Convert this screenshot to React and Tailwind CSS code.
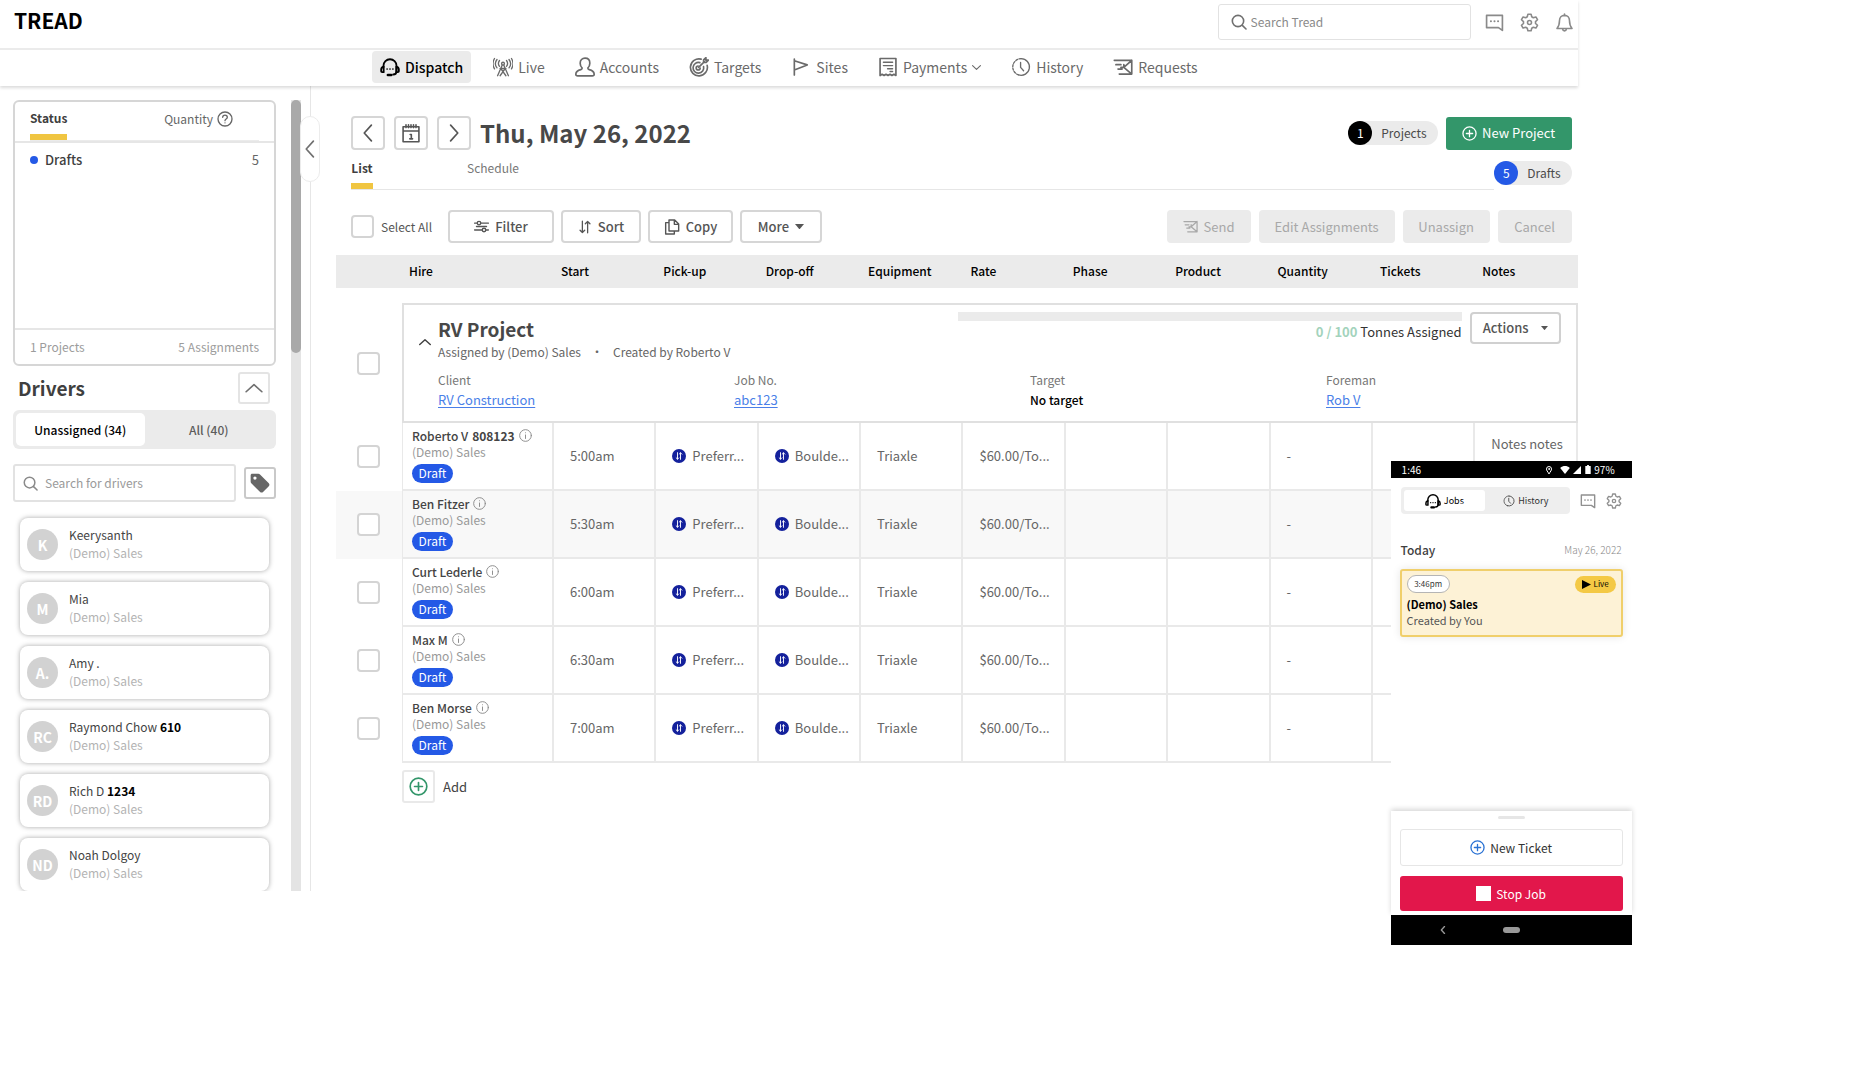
import React from 'react';

function Svg({ className = 'size-5', box = '0 0 24 24', width = 1.8, children }) {
  return (
    <svg viewBox={box} className={`shrink-0 ${className}`} fill="none" stroke="currentColor" strokeWidth={width} strokeLinecap="round" strokeLinejoin="round" aria-hidden="true">
      {children}
    </svg>
  );
}

const HeadsetIcon = ({ className }) => (
  <Svg className={className} width={2.2}>
    <path d="M4.2 12V10.5a7.8 7.8 0 0 1 15.6 0V17c0 2.4-1.6 4-4 4" />
    <path d="M4.4 11.5C2.4 12 1.4 13 1.4 15v2.2c0 .8.5 1 1.2 1h1.8zM19.6 11.5c2 .5 3 1.5 3 3.5v2.2c0 .8-.5 1-1.2 1h-1.8z" />
    <path d="M9.5 21.6h4" strokeWidth="3.2" />
    <path d="M8.5 14.5h.01M12 14.5h.01M15.5 14.5h.01" strokeWidth="2" />
  </Svg>
);

const TowerIcon = () => (
  <Svg width={1.6}>
    <circle cx="12" cy="8" r="1.7" />
    <path d="M11 9.8 5.5 22.500M13 9.8l5.500 12.700M8.500 22.500l6.100-8.600M15.500 22.500l-6.100-8.600M8.500 13.800h7" />
    <path d="M7.800 4.200c-1.500 2-1.500 5 0 7M4.800 3c-2.400 3-2.400 7 0 10M1.800 1.800c-2.400 4-2.400 8.400 0 12.400" />
    <path d="M16.200 4.200c1.500 2 1.500 5 0 7M19.200 3c2.400 3 2.400 7 0 10M22.200 1.800c2.400 4 2.400 8.400 0 12.400" />
  </Svg>
);

const UserIcon = () => (
  <Svg width={2}>
    <path d="M8.6 13.2C7 11.6 6.2 9.7 6.2 7.4 6.2 3.8 8.600 1.400 12 1.400s5.800 2.400 5.800 6c0 2.300-.8 4.200-2.400 5.800 0 1.300.4 1.700 1.600 2 3.600.9 5.800 2.200 6 5.200.1 1.500-.8 2.200-2.200 2.200H3.200c-1.400 0-2.300-.7-2.200-2.200.2-3 2.400-4.300 6-5.200 1.200-.3 1.600-.7 1.600-2z" />
  </Svg>
);

const TargetIcon = () => (
  <Svg width={2}>
    <path d="M14.500 2.600A10.200 10.200 0 1 0 21.800 10" />
    <path d="M13 6.800A6.400 6.400 0 1 0 17.500 11.500" />
    <path d="M11 10.800a2.400 2.400 0 1 0 2.400 2.400" />
    <path d="M11.500 12.500 18.500 5.500M17.500 6.500V3.500L20.300.8v3h3l-2.700 2.700z" />
  </Svg>
);

const FlagIcon = () => (
  <Svg width={2}>
    <path d="M4 2.500v19M4 4.500l15.500 5L4 15.500" />
  </Svg>
);

const ReceiptIcon = () => (
  <Svg width={2}>
    <path d="M2.500 1.800h19v20.400l-2.400-1.500-2.400 1.500-2.300-1.500-2.400 1.500-2.400-1.500-2.300 1.500-2.400-1.500-2.400 1.500z" />
    <path d="M6.500 6.300h11M6.500 10.300h11M11.500 14h6M14.500 17.300h3" strokeWidth="1.700" />
  </Svg>
);

const ClockIcon = ({ className }) => (
  <Svg className={className} width={1.6}>
    <path d="M12 2a10 10 0 1 1-3 19.500" />
    <path d="M12 2A10 10 0 0 0 9 21.500" strokeDasharray="2.400 1.800" />
    <path d="M11.500 6.500v6l3.600 4" />
  </Svg>
);

const SendIcon = ({ className }) => (
  <Svg className={className} width={2}>
    <path d="M1.500 4h21v16.500h-15M22.500 4l-9.500 8.500M22.500 20.500 13 12.500M3.500 9.200h6M6 14.500h5M13 9v3.500h-3.500" />
  </Svg>
);

const ChatIcon = ({ className }) => (
  <Svg className={className} width={2.1}>
    <path d="M2 3h20v19l-5-3.500H2z" />
    <path d="M7.500 10.500h.01M12 10.500h.01M16.500 10.500h.01" strokeWidth="2.600" />
  </Svg>
);

const GearIcon = ({ className }) => (
  <Svg className={className} width={2}>
    <path d="M10 1.500h4l.8 3.300 2 1.200 3.300-1 2 3.500-2.500 2.300v2.400l2.500 2.300-2 3.500-3.300-1-2 1.200-.8 3.300h-4l-.8-3.300-2-1.200-3.300 1-2-3.500 2.500-2.300v-2.400L1.900 8.500l2-3.500 3.300 1 2-1.200z" />
    <circle cx="12" cy="12" r="2.500" />
  </Svg>
);

const BellIcon = ({ className }) => (
  <Svg className={className} width={2}>
    <path d="M12 1.200V3M12 3c-3.800 0-6.300 2.800-6.300 6.500 0 5-1 7.500-3.200 10h19c-2.200-2.500-3.200-5-3.200-10C18.300 5.800 15.800 3 12 3zM9.500 20c.3 1.800 1.200 2.600 2.500 2.600s2.200-.8 2.500-2.600" />
  </Svg>
);

const SearchIcon = ({ className }) => (
  <Svg className={className} width={2.4}>
    <circle cx="10.500" cy="10.500" r="8.500" />
    <path d="m17 17 5.500 5.500" />
  </Svg>
);

const PlusCircleIcon = ({ className }) => (
  <Svg className={className} width={2.1}>
    <circle cx="12" cy="12" r="10.500" />
    <path d="M12 7v10M7 12h10" />
  </Svg>
);

const Chevron = ({ dir, className, width = 2.2 }) => (
  <Svg className={className} width={width}>
    {dir === 'left' && <path d="M16.500 1.500 7 12l9.500 10.500" />}
    {dir === 'right' && <path d="M7.500 1.500 17 12 7.500 22.500" />}
    {dir === 'up' && <path d="M1.500 17 12 7.500 22.500 17" />}
    {dir === 'down' && <path d="M1.500 7 12 17 22.500 7" />}
  </Svg>
);

const CalendarIcon = () => (
  <Svg className="size-5" width={1.9}>
    <path d="M2.500 4.500h19v18h-19zM2.500 9.500h19M6 2v3.500M9 2v3.500M12 2v3.500M15 2v3.500M18 2v3.500" />
    <path d="M11 13.800h1.400v5M10.500 19h3.400" />
  </Svg>
);

const HelpIcon = () => (
  <Svg className="size-4" width={2}>
    <circle cx="12" cy="12" r="10.500" />
    <path d="M8.500 9.500c0-4.500 7-4.500 7 0 0 2.500-3.500 2.500-3.500 5M12 17.800v.01" />
  </Svg>
);

const InfoIcon = () => (
  <Svg className="size-[13px] text-[#8d8d8d]" width={1.8}>
    <circle cx="12" cy="12" r="10.800" />
    <path d="M12 11v6.500M12 7v.01" />
  </Svg>
);

const SlidersIcon = () => (
  <Svg className="size-[15px]" width={2.2}>
    <circle cx="8" cy="6.500" r="2.800" />
    <circle cx="16" cy="17.500" r="2.800" />
    <path d="M1 6.500h4.200M10.800 6.500H23M1 17.500h12.200M18.800 17.500H23M4 12h16" />
  </Svg>
);

const SortIcon = ({ className, width = 2.2 }) => (
  <Svg className={className} width={width}>
    <path d="M7.500 2v19.500M3.500 17.500l4 4 4-4M16.500 22V2.500M12.500 6.500l4-4 4 4" />
  </Svg>
);

const CopyIcon = () => (
  <Svg className="size-4" width={2.1}>
    <path d="M7.500 1.500h8.500l6 6V18h-14.500zM15.500 2v6h6M7.500 5.500H2.500v17h13V18.500" />
  </Svg>
);

const TagIcon = () => (
  <svg viewBox="0 0 24 24" className="size-[22px] shrink-0" fill="#666" aria-hidden="true">
    <path fillRule="evenodd" d="M3.500 2h6.700c.8 0 1.300.2 1.800.7l9.600 9.600c.9.900.9 2.300 0 3.200l-6.300 6.300c-.9.900-2.300.9-3.200 0l-9.600-9.600c-.5-.5-.7-1-.7-1.800V3.700C1.800 2.700 2.500 2 3.500 2zM6.500 4.800a1.800 1.800 0 1 0 0 3.600 1.800 1.800 0 0 0 0-3.600z" />
  </svg>
);

const CaretDown = ({ className = 'w-[9px]' }) => (
  <svg viewBox="0 0 10 6" className={`shrink-0 ${className}`} fill="currentColor" aria-hidden="true">
    <path d="M0 0h10L5 6z" />
  </svg>
);

const NAV = [
  { label: 'Dispatch', icon: <HeadsetIcon />, active: true },
  { label: 'Live', icon: <TowerIcon /> },
  { label: 'Accounts', icon: <UserIcon /> },
  { label: 'Targets', icon: <TargetIcon /> },
  { label: 'Sites', icon: <FlagIcon /> },
  { label: 'Payments', icon: <ReceiptIcon />, menu: true },
  { label: 'History', icon: <ClockIcon /> },
  { label: 'Requests', icon: <SendIcon /> },
];

const DRIVERS = [
  { initials: 'K', name: 'Keerysanth' },
  { initials: 'M', name: 'Mia' },
  { initials: 'A.', name: 'Amy .' },
  { initials: 'RC', name: 'Raymond Chow', unit: '610' },
  { initials: 'RD', name: 'Rich D', unit: '1234' },
  { initials: 'ND', name: 'Noah Dolgoy' },
];

const COLUMNS = ['Start', 'Pick-up', 'Drop-off', 'Equipment', 'Rate', 'Phase', 'Product', 'Quantity', 'Tickets', 'Notes'];

const ROWS = [
  { name: 'Roberto V', unit: '808123', start: '5:00am', notes: 'Notes notes' },
  { name: 'Ben Fitzer', start: '5:30am', shaded: true },
  { name: 'Curt Lederle', start: '6:00am' },
  { name: 'Max M', start: '6:30am' },
  { name: 'Ben Morse', start: '7:00am' },
];

const PROJECT = [
  { label: 'Client', value: 'RV Construction', link: true },
  { label: 'Job No.', value: 'abc123', link: true },
  { label: 'Target', value: 'No target' },
  { label: 'Foreman', value: 'Rob V', link: true },
];

function Checkbox({ label }) {
  return <input type="checkbox" aria-label={label} className="block size-[23px] shrink-0 appearance-none rounded-[4px] border-2 border-[#d4d4d4] bg-white" />;
}

function Header() {
  return (
    <header className="relative z-10 bg-white shadow-[0_2px_3px_rgba(0,0,0,0.14)]">
      <div className="flex h-[50px] items-center border-b-2 border-[#ebebeb] pb-1 pl-[14px] pr-1">
        <a href="#home" className="pb-1 text-[21px] font-bold leading-[24px] text-black">TREAD</a>
        <label className="ml-auto flex h-9 w-[253px] items-center gap-1 rounded-[3px] border border-[#e2e2e2] pl-3">
          <SearchIcon className="size-4 text-[#707070]" />
          <input type="text" aria-label="Search Tread" placeholder="Search Tread" className="w-full bg-transparent outline-none placeholder:text-[#8a8a8a]" />
        </label>
        <div className="ml-[14px] flex gap-4 text-[#8a8a8a]">
          <button aria-label="Messages"><ChatIcon className="size-[19px]" /></button>
          <button aria-label="Settings"><GearIcon className="size-[19px]" /></button>
          <button aria-label="Notifications"><BellIcon className="size-[19px]" /></button>
        </div>
      </div>
      <nav className="flex h-9 items-center justify-center gap-[14px] pb-[2px]">
        {NAV.map((n) => (
          <a key={n.label} href={`#${n.label.toLowerCase()}`} className={`flex h-8 items-center gap-[5px] rounded-[4px] px-2 text-[14px] leading-5 ${n.active ? 'bg-[#ebebeb] font-medium text-black' : 'text-[#6a6a6a]'}`}>
            {n.icon}
            {n.label}
            {n.menu && <Chevron dir="down" width={3} className="size-[9px]" />}
          </a>
        ))}
      </nav>
    </header>
  );
}

function StatusCard() {
  return (
    <section className="flex h-[266px] flex-col rounded-[6px] border-2 border-[#d6d6d6] text-[#666]">
      <div className="border-b-2 border-[#e6e6e6] px-[15px]">
        <div className="flex h-[39px] justify-between border-b border-[#ebebeb]">
          <button className="flex flex-col justify-between pt-[7px] font-bold text-[#3f3f3f]">
            Status
            <span className="h-[6px] w-full bg-[#f0c541]" />
          </button>
          <button className="flex items-center gap-1 pb-1 pr-[26px]">Quantity <HelpIcon /></button>
        </div>
      </div>
      <div className="flex items-center px-[15px] pt-2">
        <span className="mr-[7px] size-2 rounded-full bg-[#2459e6]" />
        <span className="text-[13px] font-medium text-[#3f3f3f]">Drafts</span>
        <span className="ml-auto text-[13px]">5</span>
      </div>
      <div className="mt-auto flex h-9 items-center justify-between border-t-2 border-[#e6e6e6] px-[15px] text-[12px] text-[#9c9c9c]">
        <span>1 Projects</span>
        <span>5 Assignments</span>
      </div>
    </section>
  );
}

function Sidebar() {
  return (
    <aside className="flex w-[311px] shrink-0 overflow-hidden border-r border-[#e6e6e6] pl-[13px]">
      <div className="w-[263px] pt-[14px]">
        <StatusCard />
        <div className="mt-[6px] flex items-center justify-between pl-[5px] pr-[6px]">
          <h2 className="text-[19px] font-bold leading-6 text-[#3f3f3f]">Drivers</h2>
          <button aria-label="Collapse drivers" className="grid size-8 place-items-center rounded-[3px] border-2 border-[#e4e4e4] text-[#707070]"><Chevron dir="up" className="size-[18px]" /></button>
        </div>
        <div className="mt-[6px] grid h-[39px] grid-cols-2 rounded-[6px] bg-[#ebebeb] p-[3px] font-medium">
          <button className="rounded-[5px] bg-white text-black">Unassigned (34)</button>
          <button className="text-[#5c5c5c]">All (40)</button>
        </div>
        <div className="mt-[15px] flex items-center gap-2">
          <label className="flex h-[38px] flex-1 items-center gap-[7px] rounded-[3px] border-2 border-[#e2e2e2] pl-2">
            <SearchIcon className="size-[15px] text-[#8a8a8a]" />
            <input type="text" aria-label="Search for drivers" placeholder="Search for drivers" className="w-full bg-transparent outline-none placeholder:text-[#9a9a9a]" />
          </label>
          <button aria-label="Filter by tag" className="grid size-8 place-items-center rounded-[3px] border-2 border-[#c9c9c9]"><TagIcon /></button>
        </div>
        <ul className="mt-4 flex flex-col gap-[11px] pl-[7px] pr-[7px]">
          {DRIVERS.map((d) => (
            <li key={d.name} className="flex h-[53px] items-center gap-[11px] rounded-[8px] bg-white pl-[7px] shadow-[0_0_5px_rgba(0,0,0,0.35)]">
              <span className="grid size-[31px] place-items-center rounded-full bg-[#d2d2d2] text-[14px] font-bold text-white">{d.initials}</span>
              <span className="pb-[2px] leading-[18px]">
                <span className="block text-[#444]">{d.name} {d.unit && <b className="text-black">{d.unit}</b>}</span>
                <span className="block text-[#b3b3b3]">(Demo) Sales</span>
              </span>
            </li>
          ))}
        </ul>
      </div>
      <div className="ml-auto mr-[9px] mt-[14px] w-[10px] bg-[#e4e4e4]">
        <div className="h-[253px] rounded-full bg-[#a9a9a9]" />
      </div>
    </aside>
  );
}

const squareButton = 'grid size-[34px] place-items-center rounded-[4px] border-2 border-[#d6d6d6] text-[#555]';
const toolButton = 'flex h-[33px] items-center justify-center gap-[6px] rounded-[4px] border-2 border-[#d6d6d6] text-[13px] font-medium text-[#555]';
const mutedButton = 'flex h-[33px] items-center justify-center gap-[6px] rounded-[4px] bg-[#ebebeb] text-[13px] text-[#a8a8a8]';

function CountPill({ count, label, dark }) {
  return (
    <span className="flex h-6 items-center rounded-full bg-[#ebebeb] pr-[11px] text-[#4a4a4a]">
      <span className={`mr-[9px] grid size-6 place-items-center rounded-full text-white ${dark ? 'bg-black' : 'bg-[#2459e6]'}`}>{count}</span>
      {label}
    </span>
  );
}

function Controls() {
  return (
    <div className="pl-[15px] pr-[6px]">
      <div className="flex items-center gap-[9px]">
        <button aria-label="Previous day" className={squareButton}><Chevron dir="left" className="size-[18px]" /></button>
        <button aria-label="Pick a date" className={squareButton}><CalendarIcon /></button>
        <button aria-label="Next day" className={squareButton}><Chevron dir="right" className="size-[18px]" /></button>
        <h1 className="text-[24px] font-bold leading-8 text-[#484848]">Thu, May 26, 2022</h1>
        <div className="ml-auto flex items-center gap-2">
          <CountPill count="1" label="Projects" dark />
          <button className="flex h-[33px] w-[126px] items-center justify-center gap-[5px] rounded-[3px] bg-[#33966a] text-[13px] text-white"><PlusCircleIcon className="size-[15px]" />New Project</button>
        </div>
      </div>
      <div className="flex h-10 items-center">
        <div className="flex h-full flex-1 items-end gap-[94px] border-b border-[#e6e6e6]">
          <button className="flex flex-col gap-[6px] font-bold text-[#3f3f3f]">List<span className="h-[6px] w-[22px] bg-[#f0c541]" /></button>
          <button className="pb-3 text-[#777]">Schedule</button>
        </div>
        <div className="pt-[6px]"><CountPill count="5" label="Drafts" /></div>
      </div>
      <div className="mt-5 flex h-[33px] items-center gap-[7px] text-[#555]">
        <Checkbox label="Select all" />
        <span className="w-[60px]">Select All</span>
        <button className={`${toolButton} w-[106px]`}><SlidersIcon />Filter</button>
        <button className={`${toolButton} w-20`}><SortIcon className="size-[14px]" />Sort</button>
        <button className={`${toolButton} w-[85px]`}><CopyIcon />Copy</button>
        <button className={`${toolButton} w-[82px]`}>More <CaretDown /></button>
        <div className="ml-auto flex gap-2">
          <button className={`${mutedButton} w-[84px]`} disabled><SendIcon className="size-[15px]" />Send</button>
          <button className={`${mutedButton} w-[136px]`} disabled>Edit Assignments</button>
          <button className={`${mutedButton} w-[87px]`} disabled>Unassign</button>
          <button className={`${mutedButton} w-[74px]`} disabled>Cancel</button>
        </div>
      </div>
    </div>
  );
}

function ProjectCard() {
  return (
    <div className="flex h-[120px] flex-col border-2 border-[#e0e0e0] pl-3 pt-[6px]">
      <div className="flex">
        <button aria-label="Collapse project" className="mr-1 mt-[22px] self-start p-[3px] text-[#444]"><Chevron dir="up" width={3} className="size-3" /></button>
        <div className="pt-[6px]">
          <h3 className="text-[19px] font-bold leading-6 text-[#484848]">RV Project</h3>
          <p className="mt-[2px] flex text-[#666]">Assigned by (Demo) Sales<span className="w-[32px] text-center">•</span>Created by Roberto V</p>
        </div>
        <div className="ml-auto w-[504px]">
          <div className="mt-[1px] h-[9px] bg-[#ebebeb]" />
          <p className="pt-[2px] text-right text-[13px] text-[#333]"><b className="text-[#a3d3bc]">0 / 100</b> Tonnes Assigned</p>
        </div>
        <button className="ml-2 mr-[15px] mt-px flex h-[32px] w-[91px] items-center justify-center gap-3 rounded-[4px] border-2 border-[#d0d0d0] text-[13px] font-medium text-[#555]">Actions <CaretDown className="w-[7px]" /></button>
      </div>
      <dl className="mt-[11px] grid grid-cols-[296px_296px_296px_1fr] pl-[22px]">
        {PROJECT.map((p) => (
          <div key={p.label}>
            <dt className="leading-4 text-[#777]">{p.label}</dt>
            <dd className="mt-[3px] text-[13px] leading-[18px]">{p.link ? <a href={`#${p.label.toLowerCase()}`} className="text-[#4a7fe8] underline underline-offset-2">{p.value}</a> : <span className="text-[12px] font-medium text-black">{p.value}</span>}</dd>
          </div>
        ))}
      </dl>
    </div>
  );
}

function Place({ children }) {
  return (
    <span className="flex items-center gap-[6px]">
      <span className="grid size-[14px] shrink-0 place-items-center rounded-full bg-[#14219c] text-white"><SortIcon className="size-2" width={2.8} /></span>
      <span>{children}</span>
    </span>
  );
}

const cell = 'border-b-2 border-r-2 border-[#e9e9e9] pl-4 text-[13px]';

function JobsTable() {
  return (
    <table className="mt-3 w-full table-fixed border-separate border-spacing-0 text-left text-[#666]">
      <colgroup>
        <col className="w-[66px]" />
        <col className="w-[152px]" />
        {COLUMNS.map((c) => <col key={c} />)}
      </colgroup>
      <thead>
        <tr className="h-[33px] bg-[#ebebeb] text-black">
          <th aria-label="Select" />
          {['Hire', ...COLUMNS].map((c) => <th key={c} scope="col" className="pb-[2px] pl-[7px] font-medium">{c}</th>)}
        </tr>
      </thead>
      <tbody>
        <tr>
          <td className="pl-[21px] pt-4"><Checkbox label="Select RV Project" /></td>
          <td colSpan={11} className="pt-[15px]"><ProjectCard /></td>
        </tr>
        {ROWS.map((r) => (
          <tr key={r.name} className={`h-[68px] ${r.shaded ? 'bg-[#f8f8f8]' : ''}`}>
            <td className="pb-[2px] pl-[21px]"><Checkbox label={`Select ${r.name}`} /></td>
            <td className="border-b-2 border-l border-r-2 border-[#e9e9e9] pb-[2px] pl-[9px] text-[12px]">
              <span className="flex items-center gap-1 font-medium leading-4 text-[#444]">{r.name} {r.unit && <b>{r.unit}</b>}<InfoIcon /></span>
              <span className="block leading-4 text-[#999]">(Demo) Sales</span>
              <span className="mt-1 flex h-[19px] w-[41px] items-center justify-center rounded-full bg-[#2459e6] pb-px text-white">Draft</span>
            </td>
            <td className={cell}>{r.start}</td>
            <td className={cell}><Place>Preferr...</Place></td>
            <td className={cell}><Place>Boulde...</Place></td>
            <td className={cell}>Triaxle</td>
            <td className={cell}>$60.00/To...</td>
            <td className={cell} />
            <td className={cell} />
            <td className={cell}>-</td>
            <td className={cell} />
            <td className={`${cell} whitespace-nowrap pt-3 align-top`}>{r.notes}</td>
          </tr>
        ))}
      </tbody>
    </table>
  );
}

function Phone() {
  return (
    <section aria-label="Driver app" className="absolute left-full top-[461px] z-20 -ml-[187px] flex h-[484px] w-[241px] flex-col bg-white text-[#333]">
      <div className="flex h-[17px] items-center gap-[3px] bg-black pl-[11px] pr-[17px] text-[10px] leading-none text-white">
        <span className="mr-auto">1:46</span>
        <Svg className="mr-1 size-2" width={3}><path d="M12 23C7 16 4.500 13 4.500 9a7.500 7.500 0 0 1 15 0c0 4-2.500 7-7.500 14z" /><circle cx="12" cy="9" r="1.500" /></Svg>
        <svg viewBox="0 0 24 20" className="h-2 w-[10px]" fill="currentColor" aria-hidden="true"><path d="M0 5C7-1.500 17-1.500 24 5L12 20z" /></svg>
        <svg viewBox="0 0 20 20" className="size-2" fill="currentColor" aria-hidden="true"><path d="M20 0v20H0z" /></svg>
        <svg viewBox="0 0 12 20" className="ml-px h-[9px] w-[6px]" fill="currentColor" aria-hidden="true"><path d="M4 0h4v2h4v18H0V2h4z" /></svg>
        <span>97%</span>
      </div>
      <div className="flex items-center px-[10px] pt-[9px]">
        <div className="grid h-[27px] w-[169px] grid-cols-2 rounded-[4px] bg-[#eee] p-[3px] text-[9px]">
          <button className="flex items-center justify-center gap-[3px] rounded-[3px] bg-white text-black"><HeadsetIcon className="size-4" />Jobs</button>
          <button className="flex items-center justify-center gap-[3px]"><ClockIcon className="size-3" />History</button>
        </div>
        <button aria-label="Messages" className="ml-auto mr-[10px] text-[#909090]"><ChatIcon className="size-4" /></button>
        <button aria-label="Settings" className="text-[#909090]"><GearIcon className="size-4" /></button>
      </div>
      <div className="mt-7 flex items-center justify-between px-[10px]">
        <h2 className="text-[12px] font-medium leading-4 text-[#3f3f3f]">Today</h2>
        <span className="text-[10px] font-light leading-4 text-[#888]">May 26, 2022</span>
      </div>
      <article className="mx-[9px] mt-[11px] h-[68px] rounded-[3px] border-2 border-[#f0cf6b] bg-[#fdf2d6] px-[5px] pt-1 shadow-[0_0_8px_rgba(0,0,0,0.1)]">
        <div className="flex items-center justify-between text-[8px] leading-none">
          <span className="grid h-[18px] w-[43px] place-items-center rounded-full border border-[#b5b5b5] bg-white">3:46pm</span>
          <span className="flex h-[17px] w-[41px] items-center justify-center gap-[3px] rounded-full bg-[#f4c945] text-black">
            <svg viewBox="0 0 10 10" className="size-[9px]" fill="currentColor" aria-hidden="true"><path d="M0 0l10 5-10 5z" /></svg>Live
          </span>
        </div>
        <h3 className="mt-[3px] text-[11px] font-bold leading-4 text-black">(Demo) Sales</h3>
        <p className="text-[11px] leading-4 text-[#555]">Created by You</p>
      </article>
      <div className="mt-auto h-[104px] px-[9px] pt-[5px] shadow-[0_-2px_5px_rgba(0,0,0,0.16)]">
        <div className="mx-auto h-[3px] w-[27px] rounded-full bg-[#e6e6e6]" />
        <button className="mt-[10px] flex h-[37px] w-full items-center justify-center gap-[5px] rounded-[3px] border border-[#e6e6e6]"><PlusCircleIcon className="size-[15px] text-[#2a72d4]" />New Ticket</button>
        <button className="mt-[10px] flex h-[35px] w-full items-center justify-center gap-[5px] rounded-[3px] bg-[#e2174b] text-white"><span className="size-[15px] bg-white" />Stop Job</button>
      </div>
      <div className="grid h-[30px] shrink-0 grid-cols-3 place-items-center bg-black text-[#999]">
        <Chevron dir="left" width={4} className="ml-6 size-2" />
        <span className="h-[6px] w-[17px] rounded-full bg-[#999]" />
      </div>
    </section>
  );
}

export default function App() {
  return (
    <div className="min-h-screen bg-white font-['Noto_Sans_CJK_SC','Source_Sans_3',sans-serif] text-[12px] leading-[18px]">
      <div className="relative w-[85%]">
        <Header />
        <div className="flex">
          <Sidebar />
          <main className="relative min-w-0 flex-1 pl-[25px] pt-[30px]">
            <button aria-label="Hide sidebar" className="absolute -left-[11px] top-[30px] grid h-[66px] w-5 place-items-center rounded-full border border-[#ececec] bg-white text-[#707070]"><Chevron dir="left" className="size-[18px]" /></button>
            <Controls />
            <JobsTable />
            <button className="ml-[66px] mt-[7px] flex items-center gap-2 text-[13px] text-[#444]">
              <span className="grid size-[33px] place-items-center rounded-[3px] border-2 border-[#e9e9e9] text-[#33966a]"><PlusCircleIcon className="size-[19px]" /></span>
              Add
            </button>
          </main>
        </div>
        <Phone />
      </div>
    </div>
  );
}
